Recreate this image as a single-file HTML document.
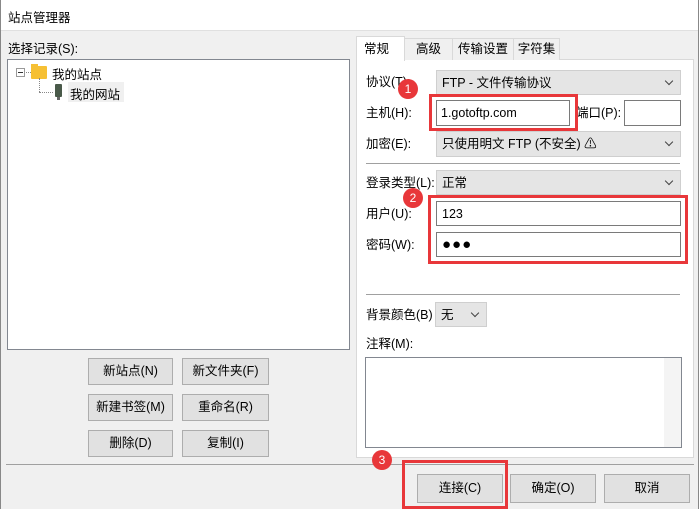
<!DOCTYPE html>
<html><head><meta charset="utf-8"><style>
*{box-sizing:border-box;margin:0;padding:0}
body{width:699px;height:509px;background:#f0f0f0;font-family:"Liberation Sans","Microsoft YaHei","Noto Sans CJK SC",sans-serif;font-size:12.5px;color:#000;position:relative;overflow:hidden}
.a{position:absolute}
.title{left:0;top:0;width:699px;height:31px;background:#fff;border-bottom:1px solid #e0e0e0}
.btn{position:absolute;background:#e1e1e1;border:1px solid #adadad;text-align:center;line-height:25px;font-size:12.5px}
.inp{position:absolute;background:#fff;border:1px solid #7a7a7a;padding-left:5px;line-height:24px}
.sel{position:absolute;background:#e5e5e5;border:1px solid #cfcfcf;padding-left:5px;line-height:24px}
.sel:after{content:"";position:absolute;right:8px;top:7px;width:5px;height:5px;border-right:1px solid #444;border-bottom:1px solid #444;transform:rotate(45deg)}
.lbl{position:absolute;left:366px}
.red{position:absolute;border:3px solid #e8373a}
.badge{position:absolute;width:20px;height:20px;border-radius:50%;background:#e8373a;color:#fff;text-align:center;line-height:20px;font-size:12px}
.tab{position:absolute;top:38px;height:22px;border:1px solid #d9d9d9;border-bottom:none;text-align:center;line-height:21px;background:#f0f0f0}
</style></head><body>
<div class="a title"></div>
<div class="a" style="left:0;top:0;width:1px;height:509px;background:#888"></div>
<div class="a" style="left:698px;top:0;width:1px;height:509px;background:#888"></div>
<div class="a" style="left:8px;top:7px">站点管理器</div>
<div class="a" style="left:8px;top:38px">选择记录(S):</div>
<div class="a" style="left:7px;top:59px;width:343px;height:291px;background:#fff;border:1px solid #828790"></div>
<div class="a" style="left:16px;top:68px;width:9px;height:9px;border:1px solid #999;background:#fff"></div>
<div class="a" style="left:18px;top:72px;width:5px;height:1px;background:#333"></div>
<div class="a" style="left:26px;top:72px;width:5px;border-top:1px dotted #888"></div>
<div class="a" style="left:31px;top:66px;width:16px;height:13px;background:#f6c034;border-radius:1px"></div>
<div class="a" style="left:31px;top:64px;width:7px;height:3px;background:#f6c034"></div>
<div class="a" style="left:52px;top:64px">我的站点</div>
<div class="a" style="left:39px;top:78px;height:14px;border-left:1px dotted #888"></div>
<div class="a" style="left:39px;top:92px;width:14px;border-top:1px dotted #888"></div>
<div class="a" style="left:55px;top:84px;width:7px;height:13px;background:#4a5a4a;border-radius:1px"></div>
<div class="a" style="left:57px;top:97px;width:3px;height:3px;background:#666"></div>
<div class="a" style="left:68px;top:82px;width:56px;height:20px;background:#f0f0f0"></div>
<div class="a" style="left:70px;top:84px">我的网站</div>
<div class="btn" style="left:88px;top:358px;width:85px;height:27px">新站点(N)</div>
<div class="btn" style="left:182px;top:358px;width:87px;height:27px">新文件夹(F)</div>
<div class="btn" style="left:88px;top:394px;width:85px;height:27px">新建书签(M)</div>
<div class="btn" style="left:182px;top:394px;width:87px;height:27px">重命名(R)</div>
<div class="btn" style="left:88px;top:430px;width:85px;height:27px">删除(D)</div>
<div class="btn" style="left:182px;top:430px;width:87px;height:27px">复制(I)</div>
<div class="a" style="left:356px;top:59px;width:338px;height:399px;background:#fff;border:1px solid #d9d9d9"></div>
<div class="tab" style="left:404px;width:49px">高级</div>
<div class="tab" style="left:452px;width:62px">传输设置</div>
<div class="tab" style="left:513px;width:47px">字符集</div>
<div class="tab" style="left:356px;top:36px;height:25px;width:49px;background:#fff;text-align:left;padding-left:7px;line-height:24px">常规</div>
<div class="lbl" style="top:71px">协议(T):</div>
<div class="sel" style="left:436px;top:70px;width:245px;height:25px">FTP - 文件传输协议</div>
<div class="lbl" style="top:102px">主机(H):</div>
<div class="inp" style="left:436px;top:100px;width:134px;height:26px;padding-left:4px">1.gotoftp.com</div>
<div class="a" style="left:576px;top:102px">端口(P):</div>
<div class="inp" style="left:624px;top:100px;width:57px;height:26px"></div>
<div class="lbl" style="top:133px">加密(E):</div>
<div class="sel" style="left:436px;top:131px;width:245px;height:26px">只使用明文 FTP (不安全) ⚠</div>
<div class="a" style="left:366px;top:163px;width:314px;height:1px;background:#a0a0a0"></div>
<div class="lbl" style="top:172px">登录类型(L):</div>
<div class="sel" style="left:436px;top:170px;width:245px;height:25px">正常</div>
<div class="lbl" style="top:203px">用户(U):</div>
<div class="inp" style="left:436px;top:201px;width:245px;height:25px">123</div>
<div class="lbl" style="top:234px">密码(W):</div>
<div class="inp" style="left:436px;top:232px;width:245px;height:25px;font-size:15px;letter-spacing:1px">●●●</div>
<div class="a" style="left:366px;top:294px;width:314px;height:1px;background:#a0a0a0"></div>
<div class="lbl" style="top:304px">背景颜色(B)</div>
<div class="sel" style="left:435px;top:302px;width:52px;height:25px">无</div>
<div class="lbl" style="top:333px">注释(M):</div>
<div class="a" style="left:365px;top:357px;width:317px;height:91px;border:1px solid #828790;background:#fff"></div>
<div class="a" style="left:664px;top:358px;width:17px;height:89px;background:#f4f4f4"></div>
<div class="a" style="left:6px;top:464px;width:688px;height:1px;background:#a0a0a0"></div>
<div class="btn" style="left:417px;top:474px;width:86px;height:29px;line-height:27px">连接(C)</div>
<div class="btn" style="left:510px;top:474px;width:86px;height:29px;line-height:27px">确定(O)</div>
<div class="btn" style="left:604px;top:474px;width:86px;height:29px;line-height:27px">取消</div>
<div class="red" style="left:429px;top:94px;width:149px;height:37px"></div>
<div class="red" style="left:428px;top:195px;width:260px;height:69px"></div>
<div class="red" style="left:402px;top:460px;width:106px;height:49px"></div>
<div class="badge" style="left:398px;top:79px">1</div>
<div class="badge" style="left:403px;top:188px">2</div>
<div class="badge" style="left:372px;top:450px">3</div>
</body></html>
